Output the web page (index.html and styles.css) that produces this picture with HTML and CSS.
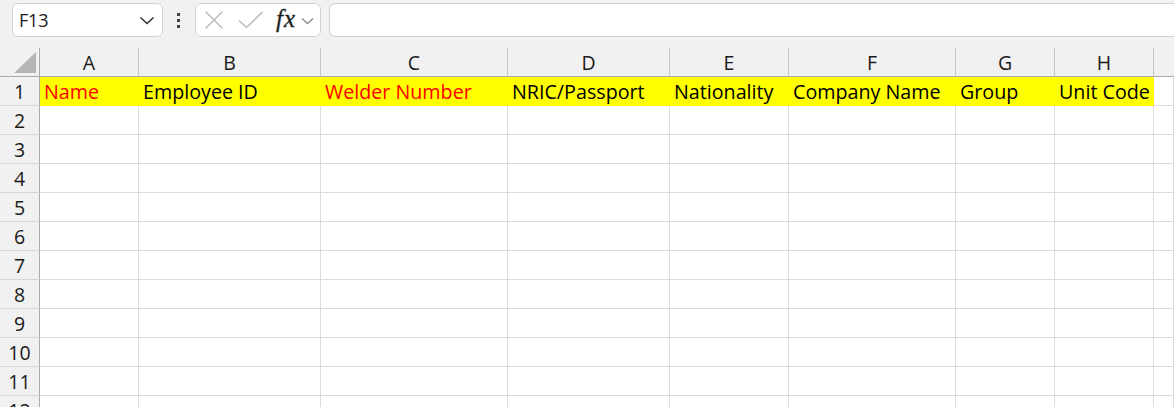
FILE: index.html
```html
<!DOCTYPE html>
<html>
<head>
<meta charset="utf-8">
<link rel="stylesheet" href="styles.css">
</head>
<body>
<div class="toolbar">
  <div class="namebox">
    <span class="nb-text">F13</span>
    <svg class="nb-chev" width="16" height="9" viewBox="0 0 16 9"><path d="M1.5 1.5 L8 7.5 L14.5 1.5" fill="none" stroke="#333" stroke-width="1.6"/></svg>
  </div>
  <div class="grip">
    <svg width="6" height="18" viewBox="0 0 6 18"><rect x="1" y="1" width="3" height="3" fill="#444"/><rect x="1" y="7" width="3" height="3" fill="#444"/><rect x="1" y="13" width="3" height="3" fill="#444"/></svg>
  </div>
  <div class="fxbox">
    <svg class="ic-x" width="20" height="20" viewBox="0 0 20 20"><path d="M1.5 1.5 L18.5 18.5 M18.5 1.5 L1.5 18.5" stroke="#bcbcbc" stroke-width="1.6" fill="none"/></svg>
    <svg class="ic-check" width="26" height="18" viewBox="0 0 26 18"><path d="M1 9.5 L8.5 16.5 L24.5 1" stroke="#bcbcbc" stroke-width="1.6" fill="none"/></svg>
    <span class="fx">fx</span>
    <svg class="fx-chev" width="13" height="8" viewBox="0 0 13 8"><path d="M1 1.5 L6.5 6.5 L12 1.5" fill="none" stroke="#8a8a8a" stroke-width="1.3"/></svg>
  </div>
  <div class="formula"></div>
</div>
<div class="sheet">
  <div class="corner"><svg width="22" height="21" viewBox="0 0 22 21"><polygon points="0,21 22,0 22,21" fill="#b5b5b5"/></svg></div>
  <div class="ch">A</div><div class="ch">B</div><div class="ch">C</div><div class="ch">D</div><div class="ch">E</div><div class="ch">F</div><div class="ch">G</div><div class="ch">H</div><div class="ch ch-last"></div>

  <div class="rh">1</div>
  <div class="c hl red">Name</div><div class="c hl">Employee ID</div><div class="c hl red">Welder Number</div><div class="c hl">NRIC/Passport</div><div class="c hl">Nationality</div><div class="c hl">Company Name</div><div class="c hl">Group</div><div class="c hl">Unit Code</div><div class="c"></div>

  <div class="rh">2</div><div class="c"></div><div class="c"></div><div class="c"></div><div class="c"></div><div class="c"></div><div class="c"></div><div class="c"></div><div class="c"></div><div class="c"></div>
  <div class="rh">3</div><div class="c"></div><div class="c"></div><div class="c"></div><div class="c"></div><div class="c"></div><div class="c"></div><div class="c"></div><div class="c"></div><div class="c"></div>
  <div class="rh">4</div><div class="c"></div><div class="c"></div><div class="c"></div><div class="c"></div><div class="c"></div><div class="c"></div><div class="c"></div><div class="c"></div><div class="c"></div>
  <div class="rh">5</div><div class="c"></div><div class="c"></div><div class="c"></div><div class="c"></div><div class="c"></div><div class="c"></div><div class="c"></div><div class="c"></div><div class="c"></div>
  <div class="rh">6</div><div class="c"></div><div class="c"></div><div class="c"></div><div class="c"></div><div class="c"></div><div class="c"></div><div class="c"></div><div class="c"></div><div class="c"></div>
  <div class="rh">7</div><div class="c"></div><div class="c"></div><div class="c"></div><div class="c"></div><div class="c"></div><div class="c"></div><div class="c"></div><div class="c"></div><div class="c"></div>
  <div class="rh">8</div><div class="c"></div><div class="c"></div><div class="c"></div><div class="c"></div><div class="c"></div><div class="c"></div><div class="c"></div><div class="c"></div><div class="c"></div>
  <div class="rh">9</div><div class="c"></div><div class="c"></div><div class="c"></div><div class="c"></div><div class="c"></div><div class="c"></div><div class="c"></div><div class="c"></div><div class="c"></div>
  <div class="rh">10</div><div class="c"></div><div class="c"></div><div class="c"></div><div class="c"></div><div class="c"></div><div class="c"></div><div class="c"></div><div class="c"></div><div class="c"></div>
  <div class="rh">11</div><div class="c"></div><div class="c"></div><div class="c"></div><div class="c"></div><div class="c"></div><div class="c"></div><div class="c"></div><div class="c"></div><div class="c"></div>
  <div class="rh">12</div><div class="c"></div><div class="c"></div><div class="c"></div><div class="c"></div><div class="c"></div><div class="c"></div><div class="c"></div><div class="c"></div><div class="c"></div>
</div>
</body>
</html>
```

FILE: styles.css
```css
* { box-sizing: border-box; }
html, body {
  margin: 0;
  padding: 0;
  background: #f1f1f1;
  overflow: hidden;
  font-family: "Open Sans", "Noto Sans", sans-serif;
  color: #000;
}
.toolbar {
  height: 48px;
  display: flex;
  align-items: flex-start;
  padding: 3px 0 0 12px;
}
.namebox {
  width: 151px;
  height: 34px;
  background: #fff;
  border: 1px solid #d2d2d2;
  border-radius: 6px;
  display: flex;
  align-items: center;
  justify-content: space-between;
  padding: 0 6px 0 6px;
}
.nb-text {
  font-size: 18px;
  color: #1a1a1a;
  letter-spacing: -0.2px;
}
.nb-chev { margin-right: 1px; margin-top: 1px; }
.grip {
  width: 32px;
  height: 34px;
  display: flex;
  align-items: center;
  justify-content: center;
  padding-top: 1px;
}
.fxbox {
  width: 126px;
  height: 34px;
  background: #fff;
  border: 1px solid #d2d2d2;
  border-radius: 6px;
  display: flex;
  align-items: center;
  padding-left: 8px;
}
.ic-x { margin-right: 14px; }
.ic-check { margin-right: 12px; margin-top: -1px; }
.fx {
  font-family: "Liberation Serif", "DejaVu Serif", serif;
  font-style: italic;
  font-size: 25px;
  color: #1e1e1e;
  letter-spacing: 1px;
  margin-right: 5px;
  margin-top: -3px;
  -webkit-text-stroke: 0.3px #1e1e1e;
}
.fx-chev { margin-top: 1px; }
.formula {
  flex: 1;
  height: 34px;
  margin-left: 8px;
  margin-right: -12px;
  background: #fff;
  border: 1px solid #d2d2d2;
  border-radius: 6px;
}
.sheet {
  display: grid;
  grid-template-columns: 40px 99px 182px 187px 162px 119px 167px 99px 99px 1fr;
  grid-template-rows: 29px;
  grid-auto-rows: 29px;
}
.corner {
  background: #f1f1f1;
  border-right: 1px solid #ababab;
  border-bottom: 1px solid #ababab;
  display: flex;
  align-items: flex-end;
  justify-content: flex-end;
  padding: 0 3px 3px 0;
}
.ch {
  background: #f1f1f1;
  border-right: 1px solid #c4c4c4;
  border-bottom: 1px solid #ababab;
  font-size: 19.5px;
  line-height: 29px;
  text-align: center;
  color: #1a1a1a;
}
.ch-last { border-right: none; }
.rh {
  background: #f1f1f1;
  border-right: 1px solid #ababab;
  border-bottom: 1px solid #d6d6d6;
  font-size: 19.5px;
  line-height: 29px;
  text-align: center;
  color: #1a1a1a;
}
.c {
  background: #fff;
  border-right: 1px solid #dcdcdc;
  border-bottom: 1px solid #dcdcdc;
  font-size: 19.7px;
  line-height: 29px;
  padding-left: 4px;
  white-space: nowrap;
  overflow: hidden;
}
.c.hl {
  background: #ffff00;
  border-color: #ffff00;
}
.c.red { color: #ff0000; }
```
